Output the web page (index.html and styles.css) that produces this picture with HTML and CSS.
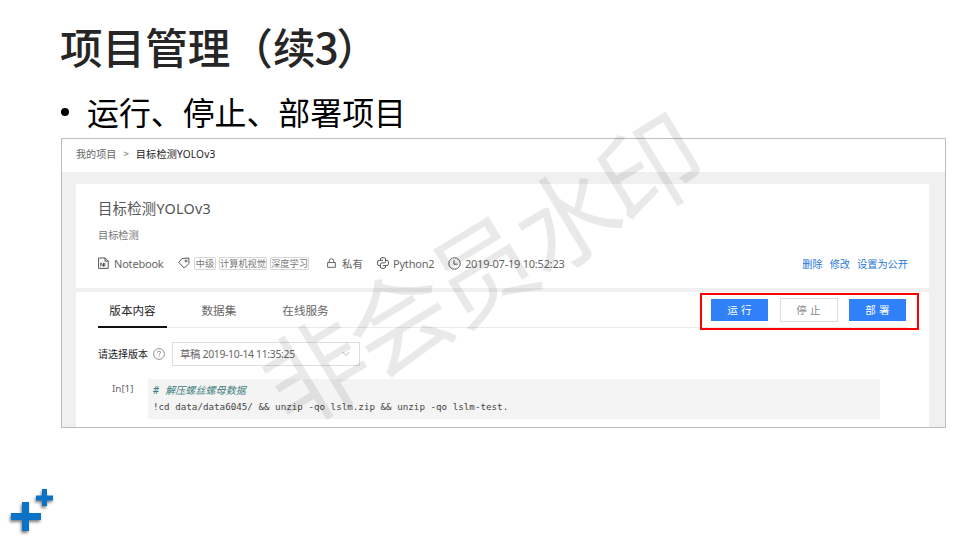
FILE: index.html
```html
<!DOCTYPE html>
<html lang="zh-CN">
<head>
<meta charset="utf-8">
<title>项目管理</title>
<link rel="stylesheet" href="styles.css">
</head>
<body>
<main class="slide">
  <h1 class="title">项目管理（续<span class="num">3</span>）</h1>
  <div class="bullet"><i class="dot"></i><span>运行、停止、部署项目</span></div>
  <section class="panel">
    <nav class="crumbs"><span>我的项目</span><span class="sep">&gt;</span><span class="current">目标检测YOLOv3</span></nav>
    <div class="content">
      <article class="card info">
        <h2>目标检测YOLOv3</h2>
        <p class="desc">目标检测</p>
        <div class="meta">
          <svg class="ic nb" viewBox="0 0 11 12"><path d="M.6 11.4V1h6.6l3 3v7.4zM7 1v3.2h3.2M2.8 9.5V5.8l2.7 3.7V5.8M6.8 6v3.5"/></svg>
          <span class="m-notebook">Notebook</span>
          <svg class="ic tagic" viewBox="0 0 12 12"><path d="M.8 5.4 4.2 1.5 10.8 1 11 6.5 6.2 11z"/><circle cx="8" cy="4" r="1"/></svg>
          <div class="tags"><span class="t1">中级</span><span class="t2">计算机视觉</span><span class="t3">深度学习</span></div>
          <svg class="ic lock" viewBox="0 0 10 11"><path d="M.7 5h8.6v5.3H.7zM2.5 5V3.2a2.5 2.5 0 0 1 5 0V5"/></svg>
          <span class="m-private">私有</span>
          <svg class="ic py" viewBox="0 0 12 12"><path d="M3.5 3.3V2q0-1.3 1.3-1.3h2.3Q8.5.7 8.5 2v2.6q0 1.3-1.3 1.3H4.8q-1.3 0-1.3 1.3v1.4H2Q.6 8.600.6 7V5q0-1.700 1.500-1.700h4M8.500 3.300H10q1.400 0 1.400 1.600v2q0 1.700-1.500 1.700h-4M8.500 8.600V10q0 1.300-1.300 1.300H4.800Q3.500 11.300 3.500 10V8.600"/></svg>
          <span class="m-python">Python2</span>
          <svg class="ic clock" viewBox="0 0 13 13"><circle cx="6.500" cy="6.500" r="5.700"/><path d="M6 3.200v4h3.600"/></svg>
          <span class="m-date">2019-07-19 10:52:23</span>
          <div class="links"><a>删除</a><a>修改</a><a>设置为公开</a></div>
        </div>
      </article>
      <article class="card version">
        <div class="tabs">
          <span class="tab active">版本内容</span><span class="tab data">数据集</span><span class="tab online">在线服务</span>
          <div class="actions"><button>运 行</button><button class="stop">停 止</button><button>部 署</button></div>
        </div>
        <div class="picker">
          <span class="label">请选择版本</span>
          <svg class="ic help" viewBox="0 0 12 12"><circle cx="6" cy="6" r="5.400"/><path d="M4.300 4.800Q4.300 3.200 6 3.200T7.700 4.700Q7.700 5.500 6 6.300V7.300M6 8.300V9.200"/></svg>
          <div class="select"><span>草稿 2019-10-14 11:35:25</span><svg class="ic chev" viewBox="0 0 8 6"><path d="M.7 1 4 4.500 7.300 1"/></svg></div>
        </div>
        <div class="cell">
          <span class="prompt">In[1]</span>
          <pre class="code"><em># 解压螺丝螺母数据</em>
<span>!cd data/data6045/ &amp;&amp; unzip -qo lslm.zip &amp;&amp; unzip -qo lslm-test.</span></pre>
        </div>
      </article>
    </div>
  </section>
  <svg class="plus" viewBox="0 0 60 60"><path d="M22 22h7v11h12v7H29v11h-7V40H11v-7h11zM42 9h5v6.500h6v5h-6V26h-5v-5.500h-6v-5h6z"/></svg>
  <div class="watermark">非会员水印</div>
</main>
</body>
</html>
```
FILE: styles.css
```css
* { box-sizing: border-box; }
body { margin: 0; background: #fff; font-family: "Noto Sans", "Noto Sans CJK SC", sans-serif; }
.slide { position: relative; width: 960px; height: 540px; overflow: hidden; padding: 17px 14px 0 60px; }
.title { margin: 0; height: 60px; font: 500 42.6px/57px "Noto Sans CJK SC", sans-serif; color: #262626; white-space: nowrap; }
.num { display: inline-block; width: 21px; margin-left: -1px; margin-right: 1px; }
.bullet { display: flex; align-items: center; height: 61px; padding-top: 6px; font: 400 31.900px/44px "Noto Sans CJK SC", sans-serif; color: #000; white-space: nowrap; }
.dot { width: 8px; height: 8px; border-radius: 50%; background: #000; margin: 3px 18px 0 1px; }
.panel { width: 885px; height: 290px; margin-left: 1px; border: 1px solid #bdbdbd; background: #fff; overflow: hidden; white-space: nowrap; }
.crumbs { display: flex; align-items: center; height: 33px; padding: 0 0 4px 14px; font-size: 10.100px; color: #666; }
.sep { margin: 0 7px 0 7px; font-size: 9.500px; }
.current { color: #222; letter-spacing: .2px; }
.content { height: 256px; background: #f0f0f0; padding: 12px 16px 0 14px; }
.card { background: #fff; }
.info { height: 104px; padding: 15px 21px 0 22px; margin-bottom: 4px; }
.info h2 { margin: 0; font-size: 14.400px; font-weight: 400; line-height: 20px; height: 26px; color: #555; letter-spacing: .22px; }
.desc { margin: 0; font-size: 10.200px; line-height: 21px; height: 26px; color: #777; }
.meta { display: flex; align-items: center; height: 24px; font-size: 11px; color: #666; }
.ic { fill: none; stroke: #555; stroke-width: 1; flex: none; }
.nb { width: 11px; height: 12px; margin-right: 5px; }
.m-notebook { width: 64px; letter-spacing: -.2px; }
.tagic { width: 12px; height: 12px; margin-right: 4px; }
.tags { display: flex; gap: 3px; width: 133px; font-size: 9.200px; color: #777; }
.tags span { height: 13px; line-height: 11px; border: 1px solid #d5d5d5; border-radius: 2px; text-align: center; flex: none; }
.t1 { width: 22px; }
.t2 { width: 48px; }
.t3 { width: 39px; }
.lock { width: 9px; height: 10px; margin-right: 6px; }
.m-private { width: 35px; font-size: 10.400px; }
.py { width: 12px; height: 12px; margin-right: 4px; }
.m-python { width: 55px; letter-spacing: -.2px; }
.clock { width: 13px; height: 13px; margin-right: 4px; }
.m-date { letter-spacing: -.23px; }
.links { display: flex; gap: 7px; margin-left: auto; font-size: 10.200px; color: #2b78d8; }
.version { height: 136px; padding: 0 22px; }
.tabs { display: flex; height: 36px; border-bottom: 1px solid #eaeaea; font-size: 11.600px; line-height: 37px; color: #666; }
.tab { height: 36px; }
.active { width: 69px; text-align: center; color: #222; border-bottom: 2px solid #111; }
.data { margin-left: 34.500px; }
.online { margin-left: 46px; }
.actions { display: flex; gap: 11.500px; align-items: center; width: 219px; height: 37px; margin: 1px -12px 0 auto; border: 2px solid #f00; padding: 0 9px; flex: none; }
.actions button { width: 57px; height: 22px; padding: 0; margin: 0 0 3px; border: 0; background: #3080f8; color: #fff; font: 10.500px/22px "Noto Sans", "Noto Sans CJK SC", sans-serif; letter-spacing: .3px; }
.actions .stop { width: 58px; height: 24px; background: #fff; border: 1px solid #ddd; color: #888; line-height: 22px; }
.picker { display: flex; align-items: center; height: 51px; }
.label { width: 55px; font-size: 10px; color: #222; }
.help { width: 12px; height: 12px; margin-right: 7px; stroke: #888; stroke-width: .9; }
.select { display: flex; justify-content: space-between; align-items: center; width: 188px; height: 24px; border: 1px solid #ddd; padding: 0 9px 0 7px; font-size: 10.400px; color: #666; }
.select span { letter-spacing: -.31px; }
.chev { width: 8px; height: 6px; stroke: #bbb; }
.cell { display: flex; width: 782px; height: 40px; }
.prompt { width: 50px; padding-left: 14px; font-size: 9.800px; line-height: 20px; color: #666; flex: none; }
.code { flex: 1; margin: 0; padding: 4px 0 0 5px; background: #f4f4f4; font: 9.230px/15.500px "DejaVu Sans Mono", "Noto Sans CJK SC", monospace; color: #444; }
.code em { color: #408080; font-size: 10.100px; }
.plus { position: absolute; left: 0; top: 480px; width: 60px; height: 60px; fill: #0b72c6; filter: drop-shadow(-1px 2px 1.500px rgba(0,0,0,.5)); }
.watermark { position: absolute; left: 478px; top: 267px; transform: translate(-50%, -50%) rotate(-31.300deg); font: 400 103px/104px "Noto Sans CJK SC", sans-serif; letter-spacing: -5px; color: rgba(0,0,0,.085); white-space: nowrap; pointer-events: none; }
```
